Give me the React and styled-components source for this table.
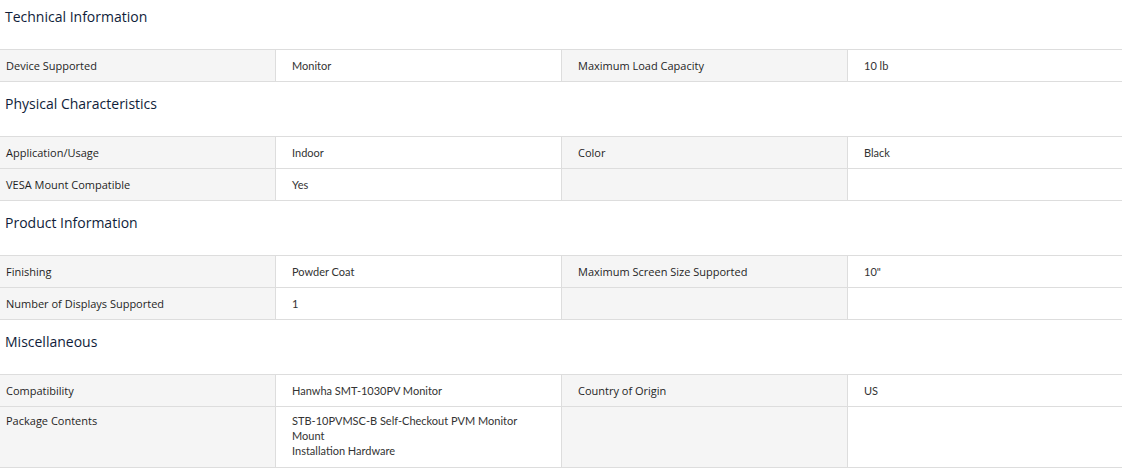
import React from "react";
import styled, { createGlobalStyle } from "styled-components";

const Global = createGlobalStyle`
  html, body { margin: 0; padding: 0; background: #fff; }
  body { font-family: "Open Sans", "Noto Sans", sans-serif; color: #333; }
`;

const Page = styled.div`
  width: 1122px;
`;

const Section = styled.section`
  display: flex;
  flex-direction: column;
`;

const Title = styled.h3`
  margin: 0;
  height: ${(p) => (p.$first ? "49px" : "54px")};
  padding-top: ${(p) => (p.$first ? "8px" : "13px")};
  box-sizing: border-box;
  padding-left: 5px;
  font-family: "Open Sans", "Noto Sans", sans-serif;
  font-size: 14px;
  line-height: 18px;
  font-weight: 400;
  color: #0f1d3a;
`;

const Table = styled.div`
  display: grid;
  grid-template-columns: 276px 286px 286px 1fr;
  border-bottom: 1px solid #dddddd;
`;

const Cell = styled.div`
  box-sizing: border-box;
  border-top: 1px solid #dddddd;
  border-right: ${(p) => (p.$last ? "none" : "1px solid #dddddd")};
  background: ${(p) => (p.$label ? "#f5f5f5" : "#ffffff")};
  padding: ${(p) => (p.$tall ? "6px 24px 9px" : "8px 24px 8px")};
  padding-left: ${(p) => (p.$first ? "6px" : "16px")};
  font-family: ${(p) =>
    p.$label ? `"Open Sans", "Noto Sans", sans-serif` : `Lato, "Open Sans", sans-serif`};
  font-size: 11px;
  line-height: 15px;
  color: ${(p) => (p.$label ? "#1f1f1f" : "#333")};
`;

const Line = styled.div``;

const sections = [
  {
    title: "Technical Information",
    rows: [["Device Supported", "Monitor", "Maximum Load Capacity", "10 lb"]],
  },
  {
    title: "Physical Characteristics",
    rows: [
      ["Application/Usage", "Indoor", "Color", "Black"],
      ["VESA Mount Compatible", "Yes", "", ""],
    ],
  },
  {
    title: "Product Information",
    rows: [
      ["Finishing", "Powder Coat", "Maximum Screen Size Supported", '10"'],
      ["Number of Displays Supported", "1", "", ""],
    ],
  },
  {
    title: "Miscellaneous",
    rows: [
      ["Compatibility", "Hanwha SMT-1030PV Monitor", "Country of Origin", "US"],
      [
        "Package Contents",
        ["STB-10PVMSC-B Self-Checkout PVM Monitor Mount", "Installation Hardware"],
        "",
        "",
      ],
    ],
  },
];

function renderValue(v) {
  if (Array.isArray(v)) return v.map((l, i) => <Line key={i}>{l}</Line>);
  return v;
}

export default function App() {
  return (
    <Page>
      <Global />
      {sections.map((s, si) => (
        <Section key={s.title}>
          <Title $first={si === 0}>{s.title}</Title>
          <Table>
            {s.rows.map((r, ri) => {
              const tall = r.some((c) => Array.isArray(c));
              return r.map((c, ci) => (
                <Cell
                  key={ri + "-" + ci}
                  $label={ci % 2 === 0}
                  $first={ci === 0}
                  $last={ci === 3}
                  $tall={tall}
                >
                  {renderValue(c)}
                </Cell>
              ));
            })}
          </Table>
        </Section>
      ))}
    </Page>
  );
}
